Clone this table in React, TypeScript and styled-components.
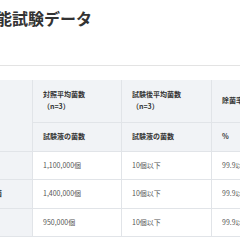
import React from "react";
import styled, { createGlobalStyle } from "styled-components";

const Global = createGlobalStyle`
  html, body { margin: 0; padding: 0; background: #fff; overflow: hidden; }
  body { font-family: "Noto Sans CJK JP", "Noto Sans", sans-serif; }
`;

const Page = styled.div`
  width: 480px;
  margin-left: -58px;
`;

const TitleBar = styled.div`
  padding: 6px 0 35px 6px;
  border-bottom: 1px solid #e3e3e3;
`;

const Title = styled.h2`
  margin: 0;
  font-size: 16px;
  line-height: 24px;
  font-weight: 700;
  color: #333;
`;

const Table = styled.table`
  margin-top: 14px;
  border-collapse: collapse;
  table-layout: fixed;
  width: 450px;
  font-size: 7px;
  line-height: 11.5px;
`;

const Th = styled.th<{ $tall?: boolean }>`
  background: #f1f3f6;
  color: #333;
  font-weight: 700;
  text-align: left;
  vertical-align: middle;
  padding: ${(p) => (p.$tall ? "9.3px 10px" : "8.3px 10px")};
  border: 1px solid #e1e4e8;
  border-top: none;
  white-space: nowrap;
  overflow: hidden;
`;

const Td = styled.td<{ $label?: boolean }>`
  background: ${(p) => (p.$label ? "#f1f3f6" : "#fff")};
  color: ${(p) => (p.$label ? "#333" : "#555")};
  font-weight: ${(p) => (p.$label ? 700 : 400)};
  text-align: left;
  padding: 8px 10px;
  border: 1px solid #e1e4e8;
  white-space: nowrap;
  overflow: hidden;
`;

const rows = [
  { label: "大腸菌", ctrl: "1,100,000個", after: "10個以下", rate: "99.9以上" },
  { label: "黄色ブドウ球菌", ctrl: "1,400,000個", after: "10個以下", rate: "99.9以上" },
  { label: "緑膿菌", ctrl: "950,000個", after: "10個以下", rate: "99.9以上" },
];

export default function App() {
  return (
    <>
      <Global />
      <Page>
        <TitleBar>
          <Title>除菌性能試験データ</Title>
        </TitleBar>
        <Table>
          <colgroup>
            <col style={{ width: 90 }} />
            <col style={{ width: 89 }} />
            <col style={{ width: 90 }} />
            <col style={{ width: 181 }} />
          </colgroup>
          <thead>
            <tr>
              <Th rowSpan={2}></Th>
              <Th $tall>
                対照平均菌数
                <br />（n=3）
              </Th>
              <Th $tall>
                試験後平均菌数
                <br />（n=3）
              </Th>
              <Th $tall>除菌率</Th>
            </tr>
            <tr>
              <Th>試験液の菌数</Th>
              <Th>試験液の菌数</Th>
              <Th>%</Th>
            </tr>
          </thead>
          <tbody>
            {rows.map((r) => (
              <tr key={r.label}>
                <Td $label>{r.label}</Td>
                <Td>{r.ctrl}</Td>
                <Td>{r.after}</Td>
                <Td>{r.rate}</Td>
              </tr>
            ))}
          </tbody>
        </Table>
      </Page>
    </>
  );
}
